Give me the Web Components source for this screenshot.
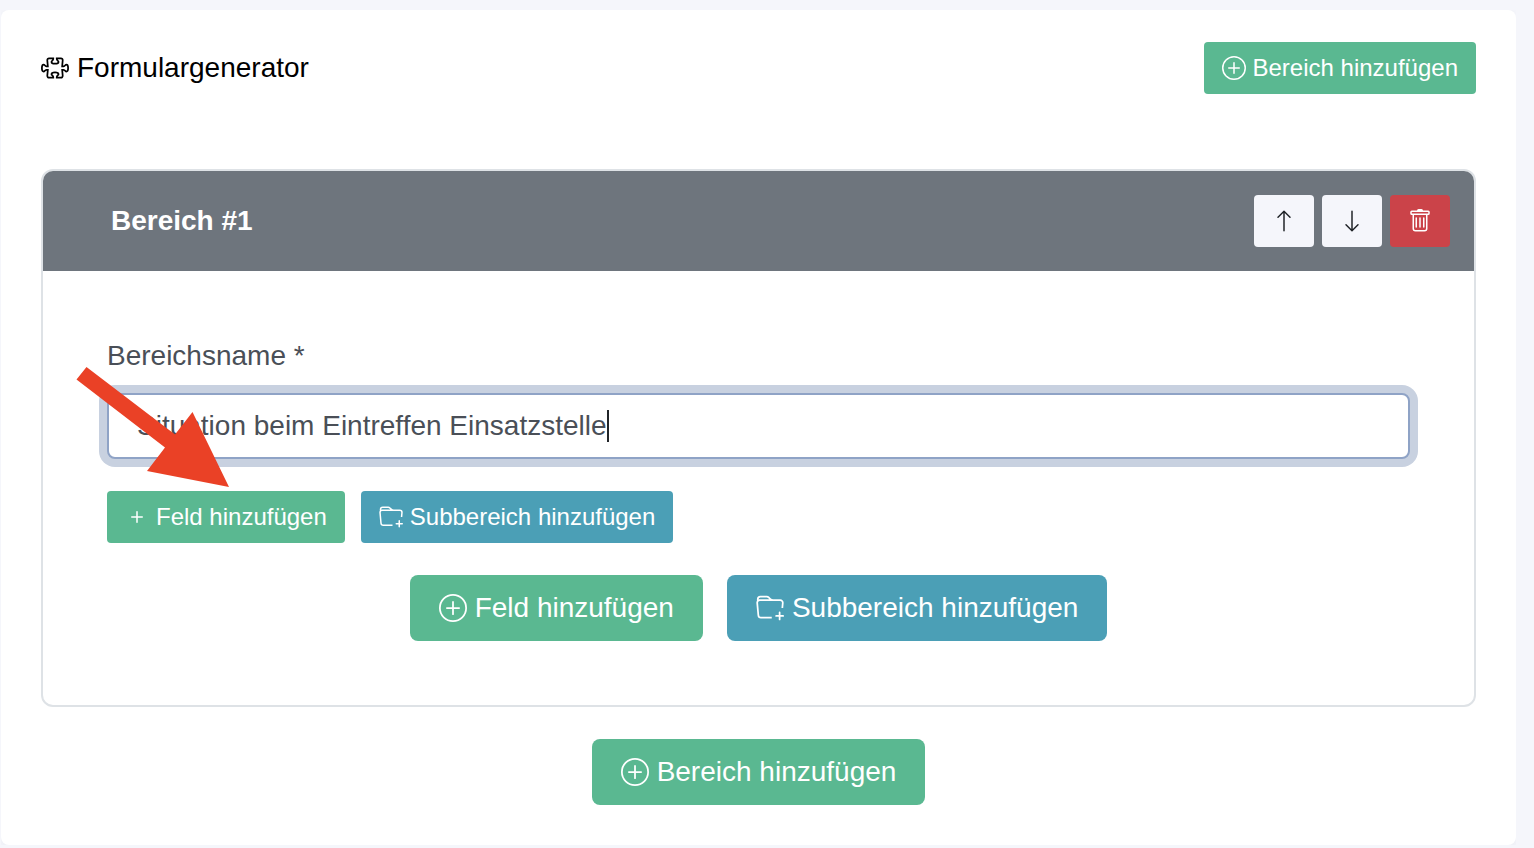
<!DOCTYPE html>
<html lang="de">
<head>
<meta charset="utf-8">
<meta name="viewport" content="width=device-width, initial-scale=1">
<title>Formulargenerator</title>
<style>
  * {
    box-sizing: border-box;
  }
  body {
    margin: 10px 18px 0 1px;
    background: #f5f6fb;
    color: #4a4f57;
    font-family: "Liberation Sans", Arial, sans-serif;
    font-size: 28px;
    line-height: 42px;
  }
</style>
</head>
<body>
<form-generator></form-generator>

<script>
const PLUS = '<path d="M8 4a.5.5 0 0 1 .5.5v3h3a.5.5 0 0 1 0 1h-3v3a.5.5 0 0 1-1 0v-3h-3a.5.5 0 0 1 0-1h3v-3A.5.5 0 0 1 8 4z"/>';

const ICONS = {
  "plus": PLUS,
  "plus-circle": '<path d="M8 15A7 7 0 1 1 8 1a7 7 0 0 1 0 14zm0 1A8 8 0 1 0 8 0a8 8 0 0 0 0 16z"/>' + PLUS,
  "folder-plus": '<path d="m.5 3 .04.87a1.99 1.99 0 0 0-.342 1.311l.637 7A2 2 0 0 0 2.826 14H9v-1H2.826a1 1 0 0 1-.995-.91l-.637-7A1 1 0 0 1 2.19 4h11.62a1 1 0 0 1 .996 1.09L14.54 8h1.005l.256-2.819A2 2 0 0 0 13.81 3H9.828a2 2 0 0 1-1.414-.586l-.828-.828A2 2 0 0 0 6.172 1H2.5a2 2 0 0 0-2 2zm5.672-1a1 1 0 0 1 .707.293L7.586 3H2.19c-.24 0-.47.042-.683.12L1.5 2.98a1 1 0 0 1 1-.98h3.672z"/><path d="M13.5 10a.5.5 0 0 1 .5.5V12h1.5a.5.5 0 1 1 0 1H14v1.5a.5.5 0 1 1-1 0V13h-1.5a.5.5 0 0 1 0-1H13v-1.5a.5.5 0 0 1 .5-.5z"/>',
  "arrow-up": '<path d="M8 15a.5.5 0 0 0 .5-.5V2.707l3.146 3.147a.5.5 0 0 0 .708-.708l-4-4a.5.5 0 0 0-.708 0l-4 4a.5.5 0 1 0 .708.708L7.5 2.707V14.5a.5.5 0 0 0 .5.5z"/>',
  "arrow-down": '<path d="M8 1a.5.5 0 0 1 .5.5v11.793l3.146-3.147a.5.5 0 0 1 .708.708l-4 4a.5.5 0 0 1-.708 0l-4-4a.5.5 0 0 1 .708-.708L7.5 13.293V1.5A.5.5 0 0 1 8 1z"/>',
  "trash": '<path d="M5.5 5.5A.5.5 0 0 1 6 6v6a.5.5 0 0 1-1 0V6a.5.5 0 0 1 .5-.5zm2.5 0a.5.5 0 0 1 .5.5v6a.5.5 0 0 1-1 0V6a.5.5 0 0 1 .5-.5zm3 .5a.5.5 0 0 0-1 0v6a.5.5 0 0 0 1 0V6z"/><path fill-rule="evenodd" d="M14.5 3a1 1 0 0 1-1 1H13v9a2 2 0 0 1-2 2H5a2 2 0 0 1-2-2V4h-.5a1 1 0 0 1-1-1V2a1 1 0 0 1 1-1H6a1 1 0 0 1 1-1h2a1 1 0 0 1 1 1h3.5a1 1 0 0 1 1 1v1zM4.118 4 4 4.059V13a1 1 0 0 0 1 1h6a1 1 0 0 0 1-1V4.059L11.882 4H4.118zM2.5 3V2h11v1h-11z"/>',
  "puzzle": '<path fill="none" stroke="currentColor" d="M4.6 2.5H7v.38c0 .46-.34.8-.68 1.07-.2.15-.32.35-.32.55 0 .6.9 1 2 1s2-.4 2-1c0-.2-.12-.4-.32-.55C9.34 3.68 9 3.34 9 2.88V2.5h2.4a1 1 0 0 1 1 1.1L12.1 7h.78c.46 0 .8-.34 1.07-.68.15-.2.35-.32.55-.32.6 0 1 .9 1 2s-.4 2-1 2c-.2 0-.4-.12-.55-.32-.27-.34-.61-.68-1.07-.68h-.78l.3 3.4a1 1 0 0 1-1 1.1H9v-.38c0-.46.34-.8.68-1.07.2-.15.32-.35.32-.55 0-.6-.9-1-2-1s-2 .4-2 1c0 .2.12.4.32.55.34.27.68.61.68 1.07v.38H4.6a1 1 0 0 1-1-1.1L3.9 9h-.78c-.46 0-.8.34-1.07.68-.15.2-.35.32-.55.32-.6 0-1-.9-1-2s.4-2 1-2c.2 0 .4.12.55.32.27.34.61.68 1.07.68h.78l-.3-3.4a1 1 0 0 1 1-1.1z"/>'
};

class BsIcon extends HTMLElement {
  constructor() {
    super();
    this.attachShadow({ mode: "open" });
  }

  connectedCallback() {
    this.shadowRoot.innerHTML = `
    <style>
      :host {
        display: block;
        flex: none;
        width: var(--icon-size, 28px);
        height: var(--icon-size, 28px);
      }
      svg {
        display: block;
        width: 100%;
        height: 100%;
      }
    </style>
    <svg viewBox="0 0 16 16" fill="currentColor" aria-hidden="true">${ICONS[this.getAttribute("name")]}</svg>`;
  }
}

class ActionButton extends HTMLElement {
  constructor() {
    super();
    this.attachShadow({ mode: "open" });
  }

  static get styles() {
    return /* css */ `
    :host {
      --bg: #5ab891;
      --fg: #fff;
      display: block;
    }
    :host([variant="info"]) {
      --bg: #4b9fb6;
    }
    :host([variant="light"]) {
      --bg: #f5f6fb;
      --fg: #212529;
    }
    :host([variant="danger"]) {
      --bg: #cb4349;
    }
    button {
      display: flex;
      align-items: center;
      justify-content: center;
      gap: 8px;
      box-sizing: border-box;
      height: 66px;
      padding: 0 29px;
      border: 0;
      border-radius: 8px;
      background: var(--bg);
      color: var(--fg);
      font: inherit;
      white-space: nowrap;
      cursor: pointer;
    }
    button:hover {
      filter: brightness(0.95);
    }
    :host([small]) button {
      --icon-size: 24px;
      gap: 7px;
      height: 52px;
      padding: 0 18px;
      border-radius: 4px;
      font-size: 24px;
    }`;
  }

  connectedCallback() {
    const label = this.getAttribute("label");
    this.shadowRoot.innerHTML = `
    <style>${ActionButton.styles}</style>
    <button type="button"${label ? ` aria-label="${label}"` : ""}>
      <bs-icon name="${this.getAttribute("icon")}"></bs-icon>
      <slot></slot>
    </button>`;
  }
}

class TextField extends HTMLElement {
  constructor() {
    super();
    this.attachShadow({ mode: "open" });
  }

  static get styles() {
    return /* css */ `
    :host {
      display: block;
    }
    label {
      display: block;
      margin-bottom: 16px;
    }
    .control {
      display: flex;
      align-items: center;
      box-sizing: border-box;
      height: 66px;
      padding: 0 28px;
      border: 2px solid #8fa3c6;
      border-radius: 8px;
      background: #fff;
      box-shadow: 0 0 0 8px #c8d1e0;
      cursor: text;
    }
    input {
      field-sizing: content;
      max-width: 100%;
      padding: 0;
      border: 0;
      outline: 0;
      background: none;
      color: inherit;
      font: inherit;
      caret-color: transparent;
    }
    .caret {
      width: 2px;
      height: 32px;
      background: #212529;
    }`;
  }

  connectedCallback() {
    this.shadowRoot.innerHTML = `
    <style>${TextField.styles}</style>
    <label for="field">${this.getAttribute("label")}</label>
    <div class="control">
      <input id="field" type="text" required value="${this.getAttribute("value")}">
      <span class="caret"></span>
    </div>`;
    const input = this.shadowRoot.querySelector("input");
    this.shadowRoot.querySelector(".control").addEventListener("click", () => input.focus());
  }
}

// red arrow laid over the form to point at a button
class PointerArrow extends HTMLElement {
  constructor() {
    super();
    this.attachShadow({ mode: "open" });
    this.shadowRoot.innerHTML = `
    <style>
      :host {
        display: block;
        width: 153px;
        height: 120px;
        pointer-events: none;
      }
      svg {
        display: block;
      }
    </style>
    <svg width="153" height="120" viewBox="0 0 153 120" aria-hidden="true">
      <path fill="#ea4126" d="M10.500 0 99 67.500 116.500 45 153 120 71 104 89 80.500 0.500 12.500z"/>
    </svg>`;
  }
}

class FormSection extends HTMLElement {
  constructor() {
    super();
    this.attachShadow({ mode: "open" });
  }

  static get styles() {
    return /* css */ `
    :host {
      display: block;
      border: 2px solid #dee2e6;
      border-radius: 12px;
      overflow: hidden;
    }
    header {
      display: flex;
      align-items: center;
      gap: 8px;
      padding: 24px 24px 24px 68px;
      background: #6e757d;
      color: #fff;
    }
    h2 {
      flex: 1;
      margin: 0;
      font-size: 28px;
      font-weight: 700;
    }
    .body {
      padding: 64px;
    }`;
  }

  connectedCallback() {
    this.shadowRoot.innerHTML = `
    <style>${FormSection.styles}</style>
    <header>
      <h2>${this.getAttribute("heading")}</h2>
      <action-button small variant="light" icon="arrow-up" label="Nach oben"></action-button>
      <action-button small variant="light" icon="arrow-down" label="Nach unten"></action-button>
      <action-button small variant="danger" icon="trash" label="Löschen"></action-button>
    </header>
    <div class="body"><slot></slot></div>`;
  }
}

class FormGenerator extends HTMLElement {
  constructor() {
    super();
    this.attachShadow({ mode: "open" });
  }

  static get styles() {
    return /* css */ `
    :host {
      display: block;
      padding: 32px 40px 40px;
      border-radius: 8px;
      background: #fff;
      box-shadow: 0 4px 12px rgba(60, 70, 90, 0.05);
    }
    .top {
      display: flex;
      align-items: center;
      justify-content: space-between;
      margin-bottom: 75px;
    }
    h1 {
      display: flex;
      align-items: center;
      gap: 8px;
      margin: 0;
      color: #000;
      font-size: 28px;
      font-weight: 400;
    }
    .name {
      position: relative;
    }
    pointer-arrow {
      position: absolute;
      left: -31px;
      top: 32px;
    }
    .row {
      display: flex;
      gap: 16px;
      margin-top: 32px;
    }
    .center {
      justify-content: center;
      gap: 24px;
    }`;
  }

  connectedCallback() {
    this.shadowRoot.innerHTML = `
    <style>${FormGenerator.styles}</style>
    <div class="top">
      <h1><bs-icon name="puzzle"></bs-icon>Formulargenerator</h1>
      <action-button small icon="plus-circle">Bereich hinzufügen</action-button>
    </div>
    <form-section heading="Bereich #1">
      <div class="name">
        <text-field label="Bereichsname *" value="Situation beim Eintreffen Einsatzstelle"></text-field>
        <pointer-arrow></pointer-arrow>
      </div>
      <div class="row">
        <action-button small icon="plus">Feld hinzufügen</action-button>
        <action-button small variant="info" icon="folder-plus">Subbereich hinzufügen</action-button>
      </div>
      <div class="row center">
        <action-button icon="plus-circle">Feld hinzufügen</action-button>
        <action-button variant="info" icon="folder-plus">Subbereich hinzufügen</action-button>
      </div>
    </form-section>
    <div class="row center">
      <action-button icon="plus-circle">Bereich hinzufügen</action-button>
    </div>`;
  }
}

customElements.define("bs-icon", BsIcon);
customElements.define("action-button", ActionButton);
customElements.define("text-field", TextField);
customElements.define("pointer-arrow", PointerArrow);
customElements.define("form-section", FormSection);
customElements.define("form-generator", FormGenerator);
</script>
</body>
</html>
